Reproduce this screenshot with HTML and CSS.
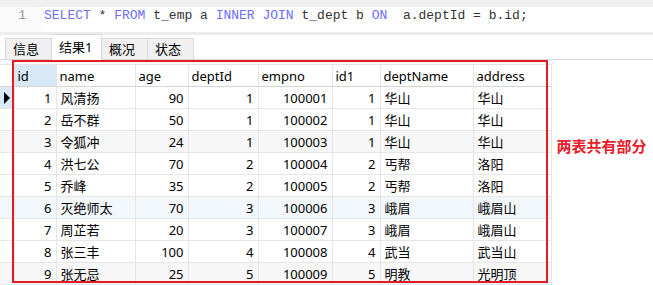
FILE: index.html
```html
<!DOCTYPE html>
<html lang="zh-CN">
<head>
    <meta charset="UTF-8">
    <title>查询结果</title>
    <link rel="stylesheet" href="styles.css">
</head>
<body>
    <div class="topband"></div>
    <div class="editor">
        <div class="gutter">1</div>
        <div class="dots"></div>
        <pre class="code"><span class="kw">SELECT</span> * <span class="kw">FROM</span> t_emp a <span class="kw">INNER JOIN</span> t_dept b <span class="kw">ON</span>  a.deptId = b.id;</pre>
    </div>
    <div class="sep"></div>

    <div class="tabs">
        <div class="tab">信息</div>
        <div class="tab active">结果1</div>
        <div class="tab">概况</div>
        <div class="tab">状态</div>
    </div>

    <div class="result">
        <table class="grid">
            <colgroup>
                <col class="c-ind">
                <col class="c-id">
                <col class="c-name">
                <col class="c-age">
                <col class="c-dept">
                <col class="c-empno">
                <col class="c-id1">
                <col class="c-dname">
                <col class="c-addr">
            </colgroup>
            <thead>
                <tr>
                    <th class="ind"></th>
                    <th class="sel">id</th>
                    <th>name</th>
                    <th>age</th>
                    <th>deptId</th>
                    <th>empno</th>
                    <th>id1</th>
                    <th>deptName</th>
                    <th>address</th>
                </tr>
            </thead>
            <tbody>
                <tr>
                    <td class="ind cur"><span class="arrow"></span></td>
                    <td class="num">1</td><td>风清扬</td><td class="num">90</td><td class="num">1</td><td class="num">100001</td><td class="num">1</td><td>华山</td><td>华山</td>
                </tr>
                <tr>
                    <td class="ind"></td>
                    <td class="num">2</td><td>岳不群</td><td class="num">50</td><td class="num">1</td><td class="num">100002</td><td class="num">1</td><td>华山</td><td>华山</td>
                </tr>
                <tr class="alt">
                    <td class="ind"></td>
                    <td class="num">3</td><td>令狐冲</td><td class="num">24</td><td class="num">1</td><td class="num">100003</td><td class="num">1</td><td>华山</td><td>华山</td>
                </tr>
                <tr>
                    <td class="ind"></td>
                    <td class="num">4</td><td>洪七公</td><td class="num">70</td><td class="num">2</td><td class="num">100004</td><td class="num">2</td><td>丐帮</td><td>洛阳</td>
                </tr>
                <tr>
                    <td class="ind"></td>
                    <td class="num">5</td><td>乔峰</td><td class="num">35</td><td class="num">2</td><td class="num">100005</td><td class="num">2</td><td>丐帮</td><td>洛阳</td>
                </tr>
                <tr class="hover">
                    <td class="ind"></td>
                    <td class="num">6</td><td>灭绝师太</td><td class="num">70</td><td class="num">3</td><td class="num">100006</td><td class="num">3</td><td>峨眉</td><td>峨眉山</td>
                </tr>
                <tr>
                    <td class="ind"></td>
                    <td class="num">7</td><td>周芷若</td><td class="num">20</td><td class="num">3</td><td class="num">100007</td><td class="num">3</td><td>峨眉</td><td>峨眉山</td>
                </tr>
                <tr>
                    <td class="ind"></td>
                    <td class="num">8</td><td>张三丰</td><td class="num">100</td><td class="num">4</td><td class="num">100008</td><td class="num">4</td><td>武当</td><td>武当山</td>
                </tr>
                <tr class="alt">
                    <td class="ind"></td>
                    <td class="num">9</td><td>张无忌</td><td class="num">25</td><td class="num">5</td><td class="num">100009</td><td class="num">5</td><td>明教</td><td>光明顶</td>
                </tr>
            </tbody>
        </table>
        <div class="note">两表共有部分</div>
        <div class="mark"></div>
    </div>
</body>
</html>
```

FILE: styles.css
```css
body {
    margin: 0;
    background: #fff;
    font-family: 'Noto Sans', 'Noto Sans CJK SC', sans-serif;
    color: #000;
    overflow: hidden;
}

.topband {
    height: 7px;
    background: #f0f0f0;
}

.editor {
    display: flex;
    height: 25px;
    background: #fff;
}

.gutter {
    width: 26px;
    padding-right: 5px;
    text-align: right;
    background: #fafafa;
    color: #999;
    font-family: 'Liberation Mono', monospace;
    font-size: 13px;
    line-height: 16px;
    padding-top: 1px;
}

.dots {
    width: 13px;
    background: #fbfbfb;
}

.code {
    margin: 0;
    padding-top: 1px;
    font-family: 'Liberation Mono', monospace;
    font-size: 13px;
    line-height: 16px;
    color: #333;
}

.kw {
    color: #6d6dff;
}

.sep {
    height: 3px;
    background: #ececec;
}

.tabs {
    display: flex;
    align-items: flex-end;
    height: 24px;
    padding-left: 5px;
    border-bottom: 1px solid #d9d9d9;
}

.tab {
    height: 21px;
    padding: 0 7px;
    background: #f0f0f0;
    border: 1px solid #d9d9d9;
    border-bottom: none;
    border-left: none;
    font-size: 13px;
    line-height: 21px;
    box-sizing: border-box;
    width: 46px;
}

.tab:first-child {
    border-left: 1px solid #d9d9d9;
    width: 47px;
}

.tab.active {
    width: 50px;
    background: #fff;
    line-height: 24px;
    margin-bottom: -1px;
    height: 26px;
}

.result {
    position: relative;
    display: flex;
    align-items: flex-start;
    padding-top: 4px;
}

.grid {
    width: 551px;
    border-collapse: collapse;
    table-layout: fixed;
    font-size: 13px;
}

.c-ind { width: 14px; }
.c-id { width: 42px; }
.c-name { width: 79px; }
.c-age { width: 53px; }
.c-dept { width: 70px; }
.c-empno { width: 74px; }
.c-id1 { width: 48px; }
.c-dname { width: 93px; }
.c-addr { width: 78px; }

.grid th,
.grid td {
    height: 21px;
    padding: 0 4px;
    border: 1px solid #e6e6e6;
    white-space: nowrap;
    overflow: hidden;
    line-height: 20px;
}

.grid th {
    font-weight: normal;
    text-align: left;
    border-bottom-color: #d6d6d6;
    padding-left: 3px;
}

.grid th.sel {
    background: #d9e8f7;
}

.grid .ind {
    padding: 0;
    border-left: none;
}

.grid td.ind.cur {
    background: #d9e8f7;
}

.arrow {
    display: block;
    width: 0;
    height: 0;
    margin-left: 4px;
    border-top: 6px solid transparent;
    border-bottom: 6px solid transparent;
    border-left: 6px solid #000;
}

.grid td.num {
    text-align: right;
}

.grid tr.alt td {
    background: #f7f7f7;
}

.grid tr.hover td {
    background: #f2f7fc;
}

.note {
    margin: 71px 0 0 5px;
    color: #e8202a;
    font-weight: bold;
    font-size: 15px;
    white-space: nowrap;
}

.mark {
    position: absolute;
    left: 12px;
    top: 0;
    width: 532px;
    height: 219px;
    border: 2px solid #e31c23;
    pointer-events: none;
}
```
